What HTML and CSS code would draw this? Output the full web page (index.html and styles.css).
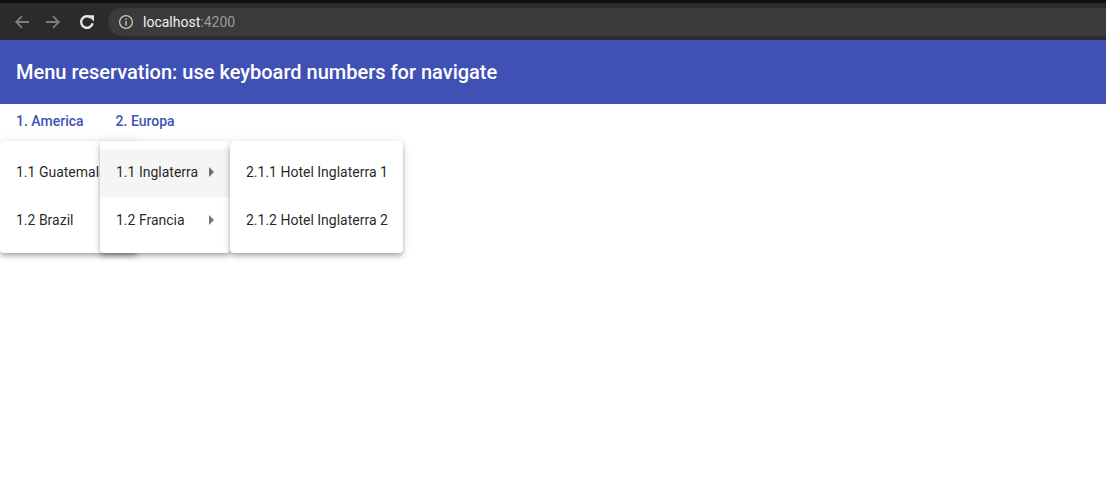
FILE: index.html
```html
<!DOCTYPE html>
<html lang="en">
<head>
<meta charset="utf-8">
<title>Menu reservation</title>
<link rel="stylesheet" href="styles.css">
</head>
<body>
<div class="browser">
  <div class="nav">
    <svg class="ico back" viewBox="0 0 16 16" width="16" height="16"><path d="M15 8H2.5M8 2.2L2.2 8 8 13.8" fill="none" stroke="currentColor" stroke-width="1.8"/></svg>
    <svg class="ico fwd" viewBox="0 0 16 16" width="16" height="16"><path d="M1 8h12.5M8 2.2L13.8 8 8 13.8" fill="none" stroke="currentColor" stroke-width="1.8"/></svg>
    <svg class="ico reload" viewBox="0 0 16 16" width="16" height="16"><path d="M13.6 9.2A5.8 5.8 0 1 1 11.9 3.8" fill="none" stroke="currentColor" stroke-width="2.4"/><path d="M8.8 1.2H15V7.4Z" fill="currentColor"/></svg>
  </div>
  <div class="omnibox">
    <svg class="info" viewBox="0 0 16 16" width="16" height="16"><circle cx="8" cy="8" r="6.4" fill="none" stroke="currentColor" stroke-width="1.3"/><rect x="7.3" y="7" width="1.4" height="4.6" fill="currentColor"/><rect x="7.3" y="4.4" width="1.4" height="1.5" fill="currentColor"/></svg>
    <span class="host">localhost</span><span class="port">:4200</span>
  </div>
</div>
<header class="toolbar">
  <h1 class="title">Menu reservation: use keyboard numbers for navigate</h1>
</header>
<main class="page">
  <nav class="triggers">
    <button class="trigger">1. America</button>
    <button class="trigger">2. Europa</button>
  </nav>
  <div class="panel panel-america">
    <div class="entry sub">1.1 Guatemala</div>
    <div class="entry sub">1.2 Brazil</div>
  </div>
  <div class="panel panel-europa">
    <div class="entry sub active">1.1 Inglaterra</div>
    <div class="entry sub">1.2 Francia</div>
  </div>
  <div class="panel panel-hotels">
    <div class="entry">2.1.1 Hotel Inglaterra 1</div>
    <div class="entry">2.1.2 Hotel Inglaterra 2</div>
  </div>
</main>
</body>
</html>
```
FILE: styles.css
```css
* { box-sizing: border-box; }
html, body { margin: 0; padding: 0; background: #fff; }
body { font-family: Roboto, "Liberation Sans", sans-serif; }

.browser {
  height: 40px;
  background: #2b2b2b;
  border-top: 3px solid #0e0e0e;
  display: flex;
  align-items: center;
  overflow: hidden;
}
.nav {
  display: flex;
  align-items: center;
  padding-left: 14px;
  gap: 15px;
}
.ico { display: block; }
.back, .fwd { color: #7d7d7d; }
.reload { color: #e6e6e6; margin-left: 3px; }
.omnibox {
  flex: 1;
  margin-left: 13px;
  height: 28px;
  margin-top: 1px;
  background: #3b3b3b;
  border-radius: 14px 0 0 14px;
  display: flex;
  align-items: center;
  padding-left: 10px;
  font-family: Roboto, "Noto Sans", sans-serif;
  font-size: 14px;
}
.info { color: #c8c8c8; margin-right: 9px; }
.host { color: #f0f0f0; }
.port { color: #9a9a9a; }

.toolbar {
  height: 64px;
  background: #3f51b5;
  display: flex;
  align-items: center;
  padding: 0 16px;
}
.title {
  margin: 0;
  color: #fff;
  font-size: 20px;
  font-weight: 500;
}

.page { position: relative; min-height: 300px; }
.triggers { display: flex; height: 36px; }
.trigger {
  border: 0;
  background: transparent;
  font-family: Roboto, sans-serif;
  font-size: 14px;
  font-weight: 500;
  color: #3f51b5;
  padding: 0 16px 2px;
  min-width: 64px;
  height: 36px;
  line-height: 34px;
  cursor: pointer;
}

.panel {
  position: absolute;
  top: 37px;
  height: 112px;
  background: #fff;
  border-radius: 4px;
  padding: 8px 0;
  display: flex;
  flex-direction: column;
  box-shadow: 0 2px 4px -1px rgba(0,0,0,.2), 0 4px 5px 0 rgba(0,0,0,.14), 0 1px 10px 0 rgba(0,0,0,.12);
}
.panel-america { left: 0; width: 137px; z-index: 1; }
.panel-europa { left: 100px; width: 130px; z-index: 2; }
.panel-hotels { left: 230px; width: 173px; z-index: 3; }

.entry {
  position: relative;
  height: 48px;
  flex: 0 0 48px;
  line-height: 46px;
  padding: 0 16px;
  font-size: 14px;
  color: rgba(0,0,0,.87);
  white-space: nowrap;
  overflow: hidden;
}
.entry.sub { padding-right: 32px; }
.entry.sub::after {
  content: "";
  position: absolute;
  right: 16px;
  top: 18px;
  border-style: solid;
  border-width: 5px 0 5px 5px;
  border-color: transparent transparent transparent rgba(0,0,0,.54);
}
.entry.active { background: rgba(0,0,0,.04); }
```
